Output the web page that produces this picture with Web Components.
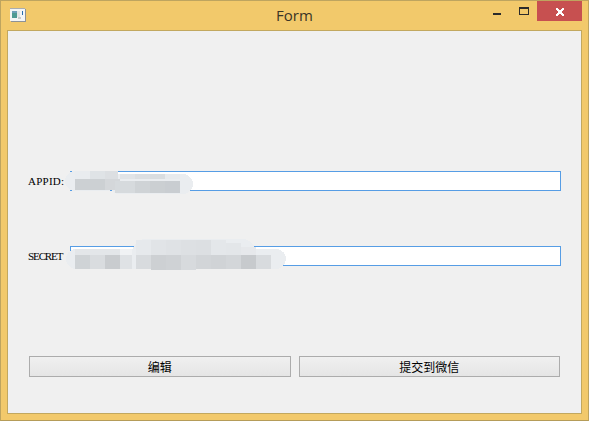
<!DOCTYPE html>
<html>
<head>
<meta charset="utf-8">
<title>Form</title>
<style>
  html, body { margin: 0; background: #f2c96b; }
</style>
</head>
<body>
<form-window caption="Form">
  <form-field label="APPID:" tracking="0.25px" patch="appid"></form-field>
  <form-field label="SECRET" tracking="-1.1px" patch="secret"></form-field>
  <form-actions>
    <flat-button>编辑</flat-button>
    <flat-button>提交到微信</flat-button>
  </form-actions>
</form-window>

<script>
class FormWindow extends HTMLElement {
  constructor () {
    super()
    this.shadow = this.attachShadow({ mode: 'open' })
  }

  connectedCallback () {
    this.shadow.innerHTML = /*html*/`
      <style>
        :host {
          display: block;
          box-sizing: border-box;
          width: 589px;
          height: 421px;
          background: #f2c96b;
          border: 1px solid #bea45f;
          border-bottom-color: #b59c59;
        }
        .bar {
          display: grid;
          grid-template-columns: 1fr auto 1fr;
          height: 29px;
        }
        .app {
          display: block;
          margin: 7px 0 0 9px;
        }
        .caption {
          font: 15px/28px "Open Sans", "Noto Sans", sans-serif;
          color: #3a3426;
        }
        .controls {
          display: flex;
          justify-content: flex-end;
          align-items: flex-start;
          margin-right: 6px;
        }
        .controls svg { display: block; }
        .client {
          box-sizing: border-box;
          height: 384px;
          margin: 0 6px;
          padding: 140px 20px 0;
          background: #f0f0f0;
          border: 1px solid #c2a85f;
          display: flex;
          flex-direction: column;
          gap: 55px;
        }
      </style>
      <div class="bar">
        <svg class="app" width="16" height="14" viewBox="0 0 16 14" shape-rendering="crispEdges">
          <rect x="1" y="1" width="15" height="13" fill="#8d9297"/>
          <rect x="0" y="0" width="15" height="13" fill="#f4f5f6"/>
          <rect x="0" y="0" width="15" height="1" fill="#a9adb1"/>
          <rect x="2" y="3" width="5" height="7" fill="#4f9a93"/>
          <rect x="2" y="3" width="5" height="2" fill="#6d9fb8"/>
          <rect x="7" y="3" width="3" height="6" fill="#e3e5e6"/>
          <rect x="12" y="3" width="1" height="4" fill="#2a6fb0"/>
          <rect x="8" y="9" width="3" height="2" fill="#c9cbcc"/>
        </svg>
        <span class="caption">${this.getAttribute('caption')}</span>
        <div class="controls">
          <svg width="26" height="20" viewBox="0 0 26 20">
            <rect x="0" y="12" width="8" height="2" fill="#2b2b2b"/>
          </svg>
          <svg width="18" height="20" viewBox="0 0 18 20">
            <rect x="0.5" y="6.5" width="9" height="7" fill="none" stroke="#2b2b2b"/>
            <rect x="0" y="6" width="10" height="2" fill="#2b2b2b"/>
          </svg>
          <svg width="45" height="20" viewBox="0 0 45 20">
            <rect width="45" height="20" fill="#c75050"/>
            <path transform="translate(1 1)" d="M18 6h2v1h1v1h2V7h1V6h2v2h-1v1h-1v2h1v1h1v2h-2v-1h-1v-1h-2v1h-1v1h-2v-2h1v-1h1V9h-1V8h-1z" fill="#fff"/>
          </svg>
        </div>
      </div>
      <div class="client"><slot></slot></div>
    `
  }
}

// the pale smudges that hide the values in the original shot
const PATCHES = {
  appid: {
    left: -5, top: -1, width: 130, height: 25,
    shapes: [[0, 1, 52, 20, 10], [44, 4, 84, 20, 10]],
    cells: [
      [10, 1, 15, 8, '#e9ecef'], [25, 1, 15, 8, '#dfe3e6'], [40, 1, 13, 8, '#dcdfe2'],
      [55, 4, 15, 5, '#e1e4e7'], [70, 4, 15, 5, '#dcdfe2'], [85, 4, 15, 5, '#d9dde0'], [100, 4, 15, 5, '#e7eaed'],
      [10, 9, 30, 11, '#ccd0d3'], [40, 9, 15, 11, '#d4d7da'], [50, 11, 20, 12, '#d6dadd'],
      [70, 11, 15, 12, '#cfd3d6'], [85, 11, 15, 12, '#cbcfd2'], [100, 11, 15, 12, '#c9cdd1']
    ]
  },
  secret: {
    left: -4, top: -7, width: 222, height: 32,
    shapes: [[0, 10, 120, 20, 10], [66, 0, 124, 30, 14], [150, 10, 70, 20, 10]],
    cells: [
      [9, 10, 45, 6, '#e3e6e9'], [54, 10, 12, 6, '#f0f2f4'],
      [70, 1, 15, 15, '#e6e9ec'], [85, 1, 15, 15, '#e1e4e7'], [100, 1, 15, 15, '#dfe2e5'],
      [115, 1, 15, 15, '#dde0e3'], [130, 1, 15, 15, '#dcdfe2'], [145, 1, 15, 15, '#e4e7ea'],
      [160, 4, 15, 12, '#e3e6e9'], [175, 8, 15, 8, '#e6e8eb'],
      [9, 16, 15, 14, '#cfd3d6'], [24, 16, 15, 14, '#d9dcdf'], [39, 16, 15, 14, '#c9cccf'],
      [54, 16, 12, 14, '#dfe2e5'], [70, 16, 15, 14, '#d8dbde'], [85, 16, 15, 15, '#cdd0d3'],
      [100, 16, 15, 15, '#cfd2d5'], [115, 16, 15, 15, '#d7dadd'], [130, 16, 15, 14, '#d2d5d8'],
      [145, 16, 15, 14, '#d0d3d6'], [160, 16, 15, 14, '#d3d6d9'], [175, 16, 15, 14, '#c7cacd'],
      [190, 16, 15, 14, '#d8dbde']
    ]
  }
}

class FormField extends HTMLElement {
  constructor () {
    super()
    this.shadow = this.attachShadow({ mode: 'open' })
  }

  patchSvg (p) {
    const shapes = p.shapes.map(([x, y, w, h, r]) =>
      `<rect x="${x}" y="${y}" width="${w}" height="${h}" rx="${r}" fill="#eaedf0"/>`).join('')
    const cells = p.cells.map(([x, y, w, h, c]) =>
      `<rect x="${x}" y="${y}" width="${w}" height="${h}" fill="${c}"/>`).join('')
    return `<svg class="patch" style="left:${p.left}px;top:${p.top}px" width="${p.width}" height="${p.height}" shape-rendering="crispEdges">${shapes}${cells}</svg>`
  }

  connectedCallback () {
    this.shadow.innerHTML = /*html*/`
      <style>
        :host {
          display: flex;
          align-items: flex-start;
          height: 20px;
        }
        .label {
          width: 42px;
          font: 11px/21px "Liberation Serif", serif;
          letter-spacing: ${this.getAttribute('tracking')};
          color: #000;
        }
        .box {
          position: relative;
          flex: 1;
          box-sizing: border-box;
          height: 20px;
          background: #fff;
          border: 1px solid #569de5;
        }
        .patch { position: absolute; display: block; margin: -1px; }
      </style>
      <span class="label">${this.getAttribute('label')}</span>
      <div class="box">${this.patchSvg(PATCHES[this.getAttribute('patch')])}</div>
    `
  }
}

class FormActions extends HTMLElement {
  constructor () {
    super()
    this.attachShadow({ mode: 'open' }).innerHTML = /*html*/`
      <style>
        :host {
          display: flex;
          gap: 8px;
          margin: 35px 1px 0;
        }
      </style>
      <slot></slot>
    `
  }
}

class FlatButton extends HTMLElement {
  constructor () {
    super()
    this.attachShadow({ mode: 'open' }).innerHTML = /*html*/`
      <style>
        :host {
          display: block;
          flex: 1;
          box-sizing: border-box;
          height: 21px;
          border: 1px solid #acacac;
          background: linear-gradient(#f0f0f0, #e5e5e5);
          font: 12px/19px "Noto Sans CJK SC", sans-serif;
          color: #000;
          text-align: center;
        }
      </style>
      <slot></slot>
    `
  }
}

customElements.define('form-window', FormWindow)
customElements.define('form-field', FormField)
customElements.define('form-actions', FormActions)
customElements.define('flat-button', FlatButton)
</script>
</body>
</html>
